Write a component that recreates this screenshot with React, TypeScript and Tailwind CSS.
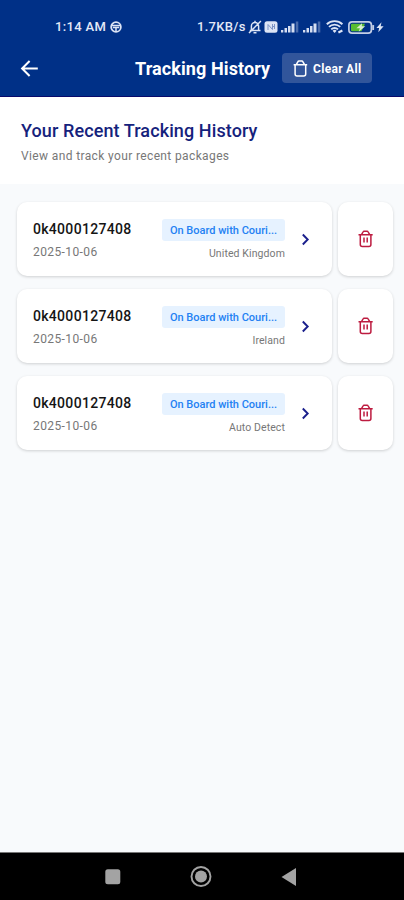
import React from "react";

const history = [
  { code: "0k4000127408", date: "2025-10-06", status: "On Board with Couri...", place: "United Kingdom" },
  { code: "0k4000127408", date: "2025-10-06", status: "On Board with Couri...", place: "Ireland" },
  { code: "0k4000127408", date: "2025-10-06", status: "On Board with Couri...", place: "Auto Detect" },
];

function Signal() {
  return (
    <svg width="18" height="12" viewBox="0 0 18 12" fill="#d5def2">
      <rect x="0" y="9" width="2.3" height="2.5" />
      <rect x="3.5" y="7" width="2.5" height="4.5" />
      <rect x="7" y="5" width="2.5" height="6.5" />
      <rect x="10.5" y="2.5" width="3" height="9" />
      <rect x="14.8" y="0.5" width="2.5" height="11" opacity="0.35" />
    </svg>
  );
}

function StatusBar() {
  return (
    <div className="flex h-10 items-center pt-[14px] pl-[55px] text-[13px] font-medium text-[#e3e9f7]">
      <span className="w-[55px] tracking-[0.35px] whitespace-nowrap">1:14 AM</span>
      <svg width="12" height="12" viewBox="0 0 12 12" fill="none" stroke="#dce4f5" strokeWidth="1.7">
        <circle cx="6" cy="6" r="4.9" />
        <path d="M1.5 4.6h9M2.8 6.5h6.4M6 6v4.5" strokeWidth="1.5" />
      </svg>
      <span className="ml-[75px] w-[51px] tracking-[0.3px] whitespace-nowrap">1.7KB/s</span>
      <svg width="14" height="14" viewBox="0 0 14 14" fill="none" stroke="#dce4f5" strokeWidth="1.5">
        <path d="M1.8 10.5h10.7M3.4 10V6a3.6 3.6 0 0 1 7.2 0v4M7 .8v2M5.5 12.8h3M1 13 12.9 1" />
      </svg>
      <svg className="ml-[2px]" width="14" height="12" viewBox="0 0 14 12">
        <rect x="0.5" y="0.2" width="13" height="11.6" rx="2.5" fill="#dce4f5" />
        <path d="M4 9V3.5l4.5 5V3M8.5 5.5h2M10.5 3v5" fill="none" stroke="#7c93c4" strokeWidth="1" />
      </svg>
      <span className="ml-[3px] flex gap-1">
        <Signal />
        <Signal />
      </span>
      <svg className="ml-[5px]" width="19" height="14" viewBox="0 0 19 14" fill="none" stroke="#dce4f5" strokeWidth="1.9">
        <path d="M.8 4.2a11.5 11.5 0 0 1 15.6 0M3 6.9a8 8 0 0 1 11.2 0M5.2 9.4a4.8 4.8 0 0 1 6.8 0" />
        <path d="M6.6 10.8a2.8 2.8 0 0 1 4 0L8.6 13z" fill="#dce4f5" stroke="none" />
        <path d="M12.4 12.6 16.4 10.6" strokeWidth="2.2" />
      </svg>
      <svg className="ml-[3px]" width="27" height="13" viewBox="0 0 27 13">
        <rect x="0.9" y="0.9" width="22.5" height="11.2" rx="3.2" fill="none" stroke="#c3cee6" strokeWidth="1.7" />
        <path d="M4 2.8h13l-3.5 7.4H4a1 1 0 0 1-1-1V3.8a1 1 0 0 1 1-1z" fill="#58bd32" />
        <path d="m14 2.3-5.6 5h3.5l-1.2 3.5 6.6-5.5h-3.5z" fill="#d9efcf" />
        <rect x="24.2" y="4" width="1.9" height="5" rx="0.6" fill="#c3cee6" />
      </svg>
      <svg className="ml-[1px]" width="8" height="12" viewBox="0 0 8 12" fill="#dce4f5">
        <path d="M5.5 1.2.4 6.9h2.7L2.3 11.2 7.6 5.3H4.7z" />
      </svg>
    </div>
  );
}

function Header() {
  return (
    <header className="h-[97px] shrink-0 border-b border-[#09096b] bg-[#003087] text-white">
      <StatusBar />
      <div className="flex h-14 items-center pl-[20px]">
        <svg width="19" height="18" viewBox="0 0 19 18" fill="none" stroke="white" strokeWidth="2">
          <path d="M17.8 9.5H2.5M9.6 2 2.1 9.5 9.6 17" />
        </svg>
        <h1 className="ml-[96px] w-[147px] pt-[1px] text-[18px] font-bold tracking-[0.1px] whitespace-nowrap">Tracking History</h1>
        <button className="flex h-[30px] w-[90px] items-center rounded-[4px] bg-[#31559b] pl-[11px] text-[12px] font-bold tracking-[0.3px] whitespace-nowrap">
          <svg className="mr-[5px] shrink-0" width="15" height="17" viewBox="0 0 15 17" fill="none" stroke="white" strokeWidth="1.5">
            <path d="M.6 4.8h13.6M3.3 4.6l1.5-2.7a1.4 1.4 0 0 1 1.2-.8h2.8a1.4 1.4 0 0 1 1.2.8l1.5 2.7M2.1 4.8v9.1a2 2 0 0 0 2 2h6.6a2 2 0 0 0 2-2V4.8" />
          </svg>
          <span className="pt-[1px]">Clear All</span>
        </button>
      </div>
    </header>
  );
}

function TrashIcon() {
  return (
    <svg width="16" height="18" viewBox="0 0 16 18" fill="none" stroke="#bd1c40" strokeWidth="1.5">
      <path d="M.5 4.8h14.2M3.5 4.6 5 2a1.4 1.4 0 0 1 1.2-.8H9a1.4 1.4 0 0 1 1.2.8l1.5 2.6M2.3 4.8v9.7a2 2 0 0 0 2 2h6.6a2 2 0 0 0 2-2V4.8" />
      <path d="M6 7.5v5M9.2 7.5v5" strokeWidth="1.5" />
    </svg>
  );
}

export default function App() {
  return (
    <div className="flex h-[900px] w-[404px] flex-col overflow-hidden bg-[#f8fafc] font-['Roboto',sans-serif]">
      <Header />

      <section className="h-[87px] shrink-0 bg-white pt-[23px] pl-[21px]">
        <h2 className="text-[18px] leading-[22px] font-medium tracking-[0.1px] whitespace-nowrap text-[#15227c]">Your Recent Tracking History</h2>
        <p className="mt-[6px] text-[12px] leading-4 tracking-[0.37px] text-[#777]">View and track your recent packages</p>
      </section>

      <main className="flex flex-1 flex-col gap-[13px] pt-[18px] pr-[11px] pl-[17px]">
        {history.map((item, index) => (
          <div key={index} className="flex h-[74px] gap-[6px]">
            <div className="flex w-[315px] rounded-[10px] bg-white pl-4 shadow-[0_1px_3px_rgba(0,0,0,0.17)]">
              <div className="w-[129px] pt-[18px]">
                <div className="text-[14px] leading-[18px] font-medium tracking-[0.3px] text-[#151515]">{item.code}</div>
                <div className="mt-[6px] text-[12px] leading-4 tracking-[0.4px] text-[#777]">{item.date}</div>
              </div>
              <div className="w-[123px] pt-[17px] text-right whitespace-nowrap">
                <div className="h-[22px] rounded-[3px] bg-[#e6f2ff] text-center text-[11px] leading-[23px] font-medium text-[#2381f3]">
                  {item.status}
                </div>
                <div className="mt-[6px] text-[10.5px] leading-[14px] tracking-[0.1px] text-[#777]">{item.place}</div>
              </div>
              <svg className="mt-[31px] ml-[16px]" width="9" height="13" viewBox="0 0 9 13" fill="none" stroke="#1a1f8c" strokeWidth="1.9">
                <path d="m1.8 1.5 4.9 5-4.9 5" />
              </svg>
            </div>
            <button className="flex w-[55px] items-center justify-center rounded-[10px] bg-white shadow-[0_1px_3px_rgba(0,0,0,0.17)]">
              <TrashIcon />
            </button>
          </div>
        ))}
      </main>

      <nav className="flex h-12 shrink-0 items-center border-t border-[#777] bg-black pl-[105px]">
        <svg width="16" height="16" viewBox="0 0 16 16">
          <rect x="0.3" y="0.3" width="15" height="15" rx="2.5" fill="#a3a3a3" />
        </svg>
        <svg className="ml-[69px]" width="22" height="22" viewBox="0 0 22 22">
          <circle cx="11" cy="10.5" r="9.5" fill="none" stroke="#a3a3a3" strokeWidth="1.9" />
          <circle cx="11" cy="10.5" r="6" fill="#a3a3a3" />
        </svg>
        <svg className="ml-[69px]" width="16" height="18" viewBox="0 0 16 18">
          <path d="M15 0v18L.5 9z" fill="#a3a3a3" />
        </svg>
      </nav>
    </div>
  );
}
